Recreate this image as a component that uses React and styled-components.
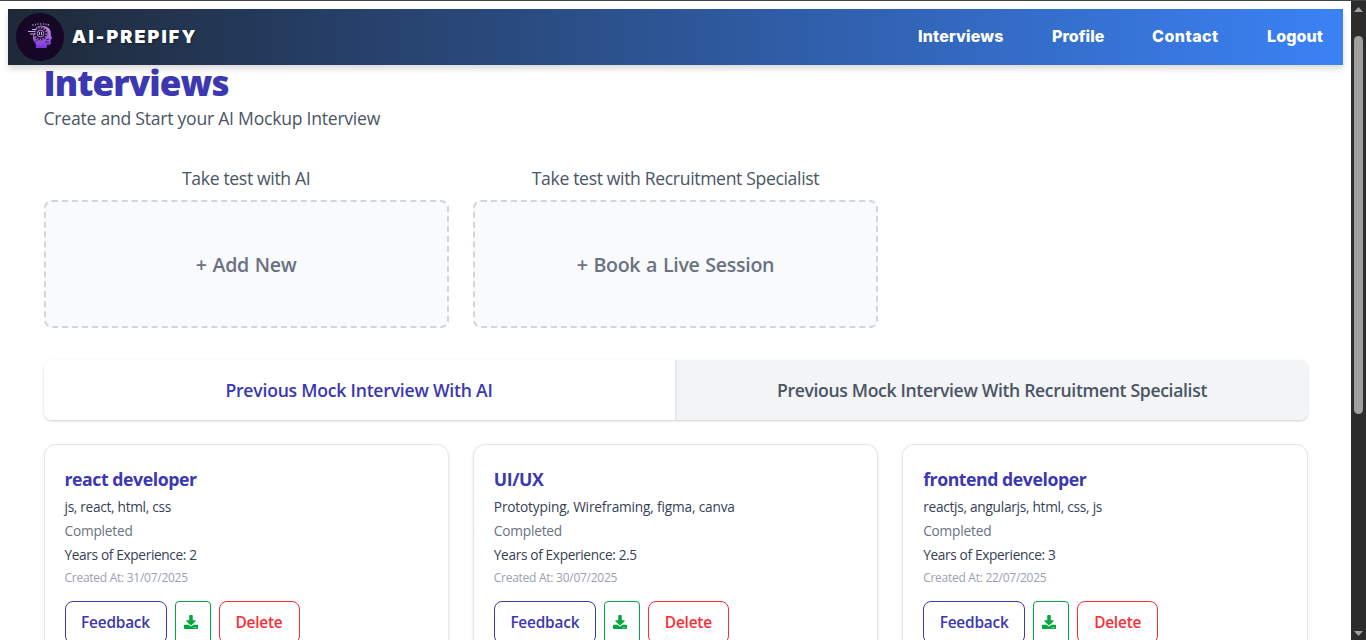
import React from "react";
import styled, { createGlobalStyle } from "styled-components";
import { FaDownload } from "react-icons/fa";

const GlobalStyle = createGlobalStyle`
  * { box-sizing: border-box; }
  html, body { margin: 0; padding: 0; overflow: hidden; }
  body { background: #fff; font-family: "Open Sans", "Noto Sans", sans-serif; }
  h1, h2, p { margin: 0; }
  button { font-family: inherit; margin: 0; padding: 0; }
`;

const Window = styled.div`
  display: flex;
  height: 640px;
  border-top: 1px solid #444444;
  overflow: hidden;
`;

const Page = styled.div`
  flex: 1;
  min-width: 0;
  padding: 8px 8px 0;
  overflow: hidden;
`;

const Navbar = styled.header`
  display: flex;
  align-items: center;
  justify-content: space-between;
  height: 56px;
  padding: 0 20px 0 8px;
  background: linear-gradient(to right, #1f2937, #3b82f6);
  box-shadow: 0 4px 6px rgba(0, 0, 0, 0.14);
  font-family: Inter, sans-serif;
  color: #fff;
`;

const Brand = styled.div`
  display: flex;
  align-items: center;
  gap: 8px;
`;

const BrandName = styled.span`
  font-size: 18px;
  line-height: 28px;
  font-weight: 900;
  letter-spacing: ${(p) => p.$spacing}px;
  text-shadow: 1px 1px 2px rgba(0, 0, 0, 0.4);
`;

const Nav = styled.nav`
  display: flex;
  gap: 48px;
  padding-bottom: 2px;
`;

const NavLink = styled.a`
  font-size: 16px;
  line-height: 24px;
  font-weight: 800;
  width: ${(p) => p.$width}px;
  letter-spacing: ${(p) => p.$spacing}px;
  white-space: nowrap;
`;

const Content = styled.main`
  padding: 1px 35.5px 0;
`;

const Heading = styled.h1`
  font-size: 35px;
  line-height: 33px;
  font-weight: 800;
  color: #3b38b0;
  letter-spacing: -0.9px;
`;

const Subtitle = styled.p`
  margin-top: 5px;
  font-size: 17.6px;
  line-height: 28px;
  font-weight: 370;
  color: #4a5565;
  letter-spacing: -0.25px;
`;

const Grid = styled.div`
  display: grid;
  grid-template-columns: repeat(3, 1fr);
  gap: 24px;
  margin-top: ${(p) => p.$top}px;
`;

const OptionLabel = styled.p`
  margin-bottom: 8px;
  font-size: 17.6px;
  line-height: 28px;
  font-weight: 370;
  text-align: center;
  color: #4a5565;
  letter-spacing: -0.35px;
`;

const OptionBox = styled.button`
  display: block;
  width: 100%;
  height: 128px;
  border: 2px dashed #d1d5dc;
  border-radius: 8px;
  background: #f9fafb;
  font-size: 19.6px;
  font-weight: 600;
  color: #6a7282;
  letter-spacing: -0.3px;
  word-spacing: 1px;
`;

const Tabs = styled.div`
  display: flex;
  height: 60px;
  margin-top: 32px;
  border-radius: 8px;
  overflow: hidden;
  box-shadow: 0 1px 3px rgba(0, 0, 0, 0.1), 0 1px 2px rgba(0, 0, 0, 0.1);
`;

const Tab = styled.button`
  flex: 1;
  border: 0;
  border-left: ${(p) => (p.$active ? "0" : "2px solid #e5e7eb")};
  background: ${(p) => (p.$active ? "#fff" : "#f3f4f6")};
  color: ${(p) => (p.$active ? "#3b38b0" : "#4a5565")};
  font-size: 17.6px;
  font-weight: 600;
  letter-spacing: ${(p) => (p.$active ? -0.22 : -0.34)}px;
`;

const Card = styled.article`
  height: 230px;
  padding: 20px;
  border: 1px solid #e5e7eb;
  border-radius: 12px;
  background: #fff;
  box-shadow: 0 1px 3px rgba(0, 0, 0, 0.1);
`;

const CardTitle = styled.h2`
  margin-bottom: 2px;
  font-size: 17.7px;
  line-height: 28px;
  font-weight: 700;
  color: #3b38b0;
  letter-spacing: -0.45px;
`;

const CardLine = styled.p`
  font-size: 13.7px;
  line-height: 24px;
  color: ${(p) => (p.$muted ? "#6a7282" : "#364153")};
  letter-spacing: ${(p) => p.$spacing ?? -0.2}px;
`;

const CardDate = styled.p`
  font-size: 12px;
  line-height: 21px;
  color: #99a1af;
  letter-spacing: -0.27px;
`;

const Actions = styled.div`
  display: flex;
  gap: 8px;
  margin-top: 13px;
`;

const ActionButton = styled.button`
  display: flex;
  align-items: center;
  justify-content: center;
  width: ${(p) => p.$width}px;
  height: 43px;
  border: 1px solid ${(p) => p.$color};
  border-radius: 8px;
  background: #fff;
  color: ${(p) => p.$color};
  font-size: 15.4px;
  font-weight: 600;
  letter-spacing: -0.2px;
`;

const DownloadButton = styled(ActionButton)`
  justify-content: flex-start;
  padding: 0 0 2px 8px;
  border-radius: 4px;
`;

const Scrollbar = styled.div`
  display: flex;
  flex-direction: column;
  align-items: center;
  justify-content: space-between;
  width: 15px;
  padding: 6px 0 4px;
  background: #2c2c2c;
`;

const Thumb = styled.div`
  width: 9px;
  height: 378px;
  margin: 24px 0 auto;
  border-radius: 5px;
  background: #9f9f9f;
`;

const ArrowIcon = styled.svg`
  display: block;
`;

const Arrow = ({ down }) => (
  <ArrowIcon width="9" height="5" viewBox="0 0 9 5">
    <path d={down ? "M0 0h9L4.5 5z" : "M0 5h9L4.5 0z"} fill="#9f9f9f" />
  </ArrowIcon>
);

const Logo = () => (
  <svg width="48" height="48" viewBox="0 0 48 48">
    <defs>
      <linearGradient id="head" x1="0" y1="0" x2="0" y2="1">
        <stop offset="0" stopColor="#b994dd" />
        <stop offset="0.5" stopColor="#a06bdc" />
        <stop offset="1" stopColor="#7a2fe0" />
      </linearGradient>
    </defs>
    <circle cx="24" cy="24" r="24" fill="#170726" />
    <path d="M16.5 12.4l1-.8M19 11.6h1M21.4 11h1.2M24.2 11h1.2M27 11h1.2M29.6 11.4h1M31.8 11.4l1.2.9" stroke="#a88bc4" strokeWidth="1.6" fill="none" />
    <path d="M20 14.5c3-2.600 9.500-2.600 12.800.8 2 2 2.300 4.500 2 6.700l1.400 3.600-1.500.8v3.800c0 1.400-1 1.800-3.600 1.500l-.6 3.400H19.700c.6-2.500.3-4-1-5.600-2-2.400-2.300-5.600-1.200-8.500z" fill="url(#head)" />
    <circle cx="24.500" cy="20.500" r="7" fill="#24103a" />
    <circle cx="24.500" cy="20.500" r="6" fill="none" stroke="#8d6bb0" strokeWidth="1.800" strokeDasharray="1.500 1.300" />
    <circle cx="24.500" cy="20.500" r="3.300" fill="#24103a" stroke="#b08fd0" strokeWidth="1" />
    <path d="M23.500 19v3M25.500 19v3M12 18.500h7M14 21h5M16 16.500h4" stroke="#c7a5e6" strokeWidth="1" />
    <path d="M19 29l3-2.500M30 27l3-1M29 29h4" stroke="#3c1663" strokeWidth="1" />
  </svg>
);

const links = [
  { label: "Interviews", width: 86, spacing: 0.15 },
  { label: "Profile", width: 52, spacing: 0.05 },
  { label: "Contact", width: 67, spacing: 0.5 },
  { label: "Logout", width: 56, spacing: 0.1 },
];

const options = [
  { label: "Take test with AI", action: "+ Add New" },
  { label: "Take test with Recruitment Specialist", action: "+ Book a Live Session" },
];

const interviews = [
  { title: "react developer", skills: "js, react, html, css", spacing: -0.31, years: "2", date: "31/07/2025" },
  { title: "UI/UX", skills: "Prototyping, Wireframing, figma, canva", spacing: -0.18, years: "2.5", date: "30/07/2025" },
  { title: "frontend developer", skills: "reactjs, angularjs, html, css, js", spacing: -0.28, years: "3", date: "22/07/2025" },
];

export default function App() {
  return (
    <>
      <GlobalStyle />
      <Window>
        <Page>
          <Navbar>
            <Brand>
              <Logo />
              <BrandName $spacing={2.1}>AI-PREPIFY</BrandName>
            </Brand>
            <Nav>
              {links.map((l) => (
                <NavLink key={l.label} $width={l.width} $spacing={l.spacing}>{l.label}</NavLink>
              ))}
            </Nav>
          </Navbar>
          <Content>
            <Heading>Interviews</Heading>
            <Subtitle>Create and Start your AI Mockup Interview</Subtitle>
            <Grid $top={32}>
              {options.map((o) => (
                <div key={o.label}>
                  <OptionLabel>{o.label}</OptionLabel>
                  <OptionBox>{o.action}</OptionBox>
                </div>
              ))}
            </Grid>
            <Tabs>
              <Tab $active>Previous Mock Interview With AI</Tab>
              <Tab>Previous Mock Interview With Recruitment Specialist</Tab>
            </Tabs>
            <Grid $top={24}>
              {interviews.map((i) => (
                <Card key={i.title}>
                  <CardTitle>{i.title}</CardTitle>
                  <CardLine $spacing={i.spacing}>{i.skills}</CardLine>
                  <CardLine $muted>Completed</CardLine>
                  <CardLine $spacing={-0.36}>Years of Experience: {i.years}</CardLine>
                  <CardDate>Created At: {i.date}</CardDate>
                  <Actions>
                    <ActionButton $width={102} $color="#3b38b0">Feedback</ActionButton>
                    <DownloadButton $width={36} $color="#00a63e">
                      <FaDownload size={14} />
                    </DownloadButton>
                    <ActionButton $width={81} $color="#fb2c36">Delete</ActionButton>
                  </Actions>
                </Card>
              ))}
            </Grid>
          </Content>
        </Page>
        <Scrollbar>
          <Arrow />
          <Thumb />
          <Arrow down />
        </Scrollbar>
      </Window>
    </>
  );
}
